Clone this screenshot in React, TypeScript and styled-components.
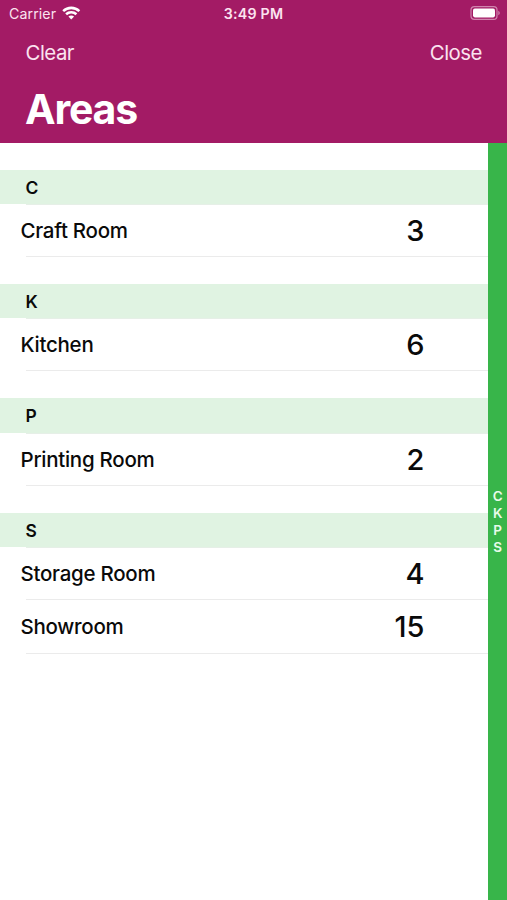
import React from "react";
import styled, { createGlobalStyle } from "styled-components";

const Global = createGlobalStyle`
  * { box-sizing: border-box; }
  html, body { margin: 0; background: #fff; }
  body { font-family: Inter, "Liberation Sans", sans-serif; overflow: hidden; }
`;

const Screen = styled.div`
  width: 507px;
  height: 900px;
  display: flex;
  flex-direction: column;
  background: #fff;
  color: #0a0a0a;
`;

const Header = styled.header`
  height: 142.6px;
  background: #a31b65;
  color: #fff;
`;

const StatusBar = styled.div`
  height: 28px;
  padding: 0 7px 0 9px;
  display: grid;
  grid-template-columns: 1fr auto 1fr;
  align-items: center;
  color: #fbe3f0;
`;

const CarrierGroup = styled.div`
  display: flex;
  align-items: center;
  gap: 6px;
  font-size: 14.2px;
  line-height: 28px;
  letter-spacing: 0.08px;

  svg {
    margin-top: -2px;
  }
`;

const Time = styled.div`
  margin-right: 2px;
  font-size: 14.2px;
  font-weight: 600;
  line-height: 28px;
  letter-spacing: 0.25px;
`;

const BatteryBox = styled.div`
  display: flex;
  justify-content: flex-end;
  margin-top: -2px;
`;

const NavBar = styled.nav`
  height: 49px;
  padding: 0 25px 0 25.5px;
  display: flex;
  justify-content: space-between;
  align-items: center;
`;

const NavButton = styled.button`
  border: 0;
  padding: 0;
  background: none;
  color: #fbe3f0;
  font: 400 20.4px/28px Inter, "Liberation Sans", sans-serif;
  letter-spacing: -0.5px;
`;

const Title = styled.h1`
  margin: 8px 0 0 25px;
  font-size: 41px;
  line-height: 49px;
  font-weight: 700;
  letter-spacing: -1.2px;
`;

const Body = styled.div`
  flex: 1;
  display: flex;
  min-height: 0;
`;

const List = styled.main`
  flex: 1;
`;

const Section = styled.section`
  padding-top: 27px;
`;

const SectionTitle = styled.h2`
  height: 34.3px;
  margin: 0;
  padding-left: 25.5px;
  background: #e0f3e2;
  font-size: 17.4px;
  line-height: 35px;
  font-weight: 600;
`;

const Row = styled.div<{ $first: boolean }>`
  height: ${(p) => (p.$first ? 53.1 : 53.4)}px;
  padding: 0 64px 0 20.5px;
  display: flex;
  justify-content: space-between;
  align-items: center;
  background:
    linear-gradient(#ebebeb, #ebebeb) 25.5px 100% / 100% 1px no-repeat,
    linear-gradient(#e6efe7, #e6efe7) 25.5px 0 / 100% ${(p) => (p.$first ? 1 : 0)}px no-repeat;
`;

const Name = styled.span`
  font-size: 20.5px;
  font-weight: 500;
  line-height: 53px;
  letter-spacing: -0.27px;
`;

const Count = styled.span`
  font-size: 29px;
  font-weight: 500;
  line-height: 53px;
`;

const IndexBar = styled.aside`
  width: 18.6px;
  display: flex;
  flex-direction: column;
  align-items: center;
  justify-content: center;
  padding-top: 1px;
  background: #38b54a;
  color: #e8fbe9;
  font-size: 13.5px;
  font-weight: 600;
  line-height: 17px;
`;

const sections = [
  { letter: "C", rows: [{ name: "Craft Room", count: 3 }] },
  { letter: "K", rows: [{ name: "Kitchen", count: 6 }] },
  { letter: "P", rows: [{ name: "Printing Room", count: 2 }] },
  {
    letter: "S",
    rows: [
      { name: "Storage Room", count: 4 },
      { name: "Showroom", count: 15 },
    ],
  },
];

const WifiIcon = () => (
  <svg width="18.5" height="14" viewBox="0 0 19 14" fill="none" stroke="#fff" strokeWidth="2.6">
    <path d="M1.2 5.1C5.9.6 13.1.6 17.8 5.1" />
    <path d="M4.2 8.3C7.2 5.4 11.8 5.4 14.8 8.3" />
    <path d="M9.5 13.7 6.6 10.7C8.2 9.2 10.8 9.2 12.4 10.7Z" fill="#fff" stroke="none" />
  </svg>
);

const BatteryIcon = () => (
  <svg width="30" height="14" viewBox="0 0 30 14" fill="none">
    <rect x="1" y=".7" width="26" height="12.6" rx="3.4" stroke="#d084ae" strokeWidth="1.2" />
    <rect x="3" y="2.6" width="22" height="8.8" rx="1.8" fill="#fff" />
    <path d="M28.3 4.8C30.2 5.6 30.2 8.4 28.3 9.2Z" fill="#d084ae" />
  </svg>
);

export default function App() {
  return (
    <Screen>
      <Global />
      <Header>
        <StatusBar>
          <CarrierGroup>
            Carrier
            <WifiIcon />
          </CarrierGroup>
          <Time>3:49 PM</Time>
          <BatteryBox>
            <BatteryIcon />
          </BatteryBox>
        </StatusBar>
        <NavBar>
          <NavButton>Clear</NavButton>
          <NavButton>Close</NavButton>
        </NavBar>
        <Title>Areas</Title>
      </Header>
      <Body>
        <List>
          {sections.map((section) => (
            <Section key={section.letter}>
              <SectionTitle>{section.letter}</SectionTitle>
              {section.rows.map((row, index) => (
                <Row key={row.name} $first={index === 0}>
                  <Name>{row.name}</Name>
                  <Count>{row.count}</Count>
                </Row>
              ))}
            </Section>
          ))}
        </List>
        <IndexBar>
          {sections.map((section) => (
            <span key={section.letter}>{section.letter}</span>
          ))}
        </IndexBar>
      </Body>
    </Screen>
  );
}
